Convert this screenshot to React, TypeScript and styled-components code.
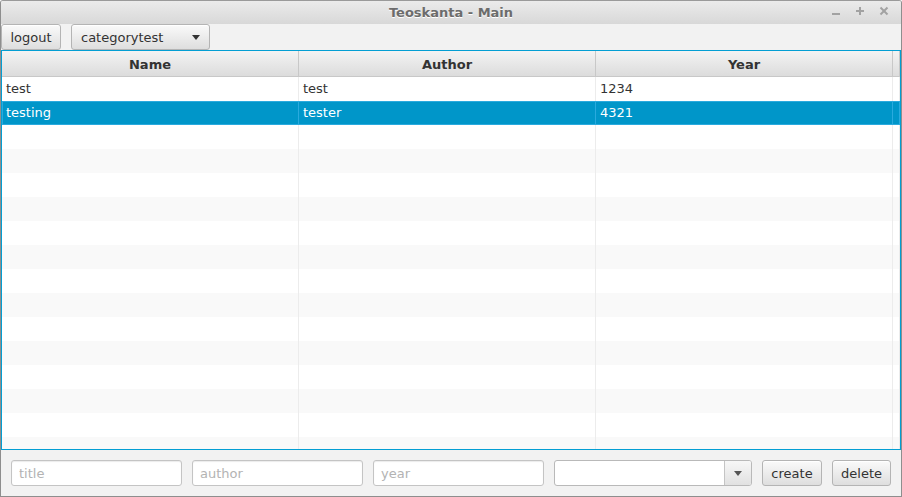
import React from "react";
import styled, { createGlobalStyle } from "styled-components";

const Global = createGlobalStyle`
  html, body { margin: 0; padding: 0; background: #ffffff; }
  body { font-family: "DejaVu Sans", "Liberation Sans", sans-serif; font-size: 13px; }
  * { box-sizing: border-box; }
`;

const Window = styled.div`
  width: 902px;
  height: 497px;
  border: 1px solid #8e8e8e;
  border-top-color: #9a9a9a;
  border-radius: 3px 3px 0 0;
  background: #f2f2f2;
  display: flex;
  flex-direction: column;
  overflow: hidden;
`;

const TitleBar = styled.div`
  height: 23px;
  flex: none;
  position: relative;
  display: flex;
  align-items: center;
  justify-content: center;
  background: linear-gradient(#ebebeb, #d8d8d8);
`;

const Title = styled.span`
  font-weight: bold;
  font-size: 13px;
  color: #6c6c6c;
  text-shadow: 0 1px 0 #ffffff;
`;

const Controls = styled.div`
  position: absolute;
  right: 12px;
  top: 5px;
  display: flex;
  gap: 14px;
`;

const Toolbar = styled.div`
  height: 26px;
  flex: none;
  display: flex;
  gap: 10px;
  align-items: stretch;
`;

const Button = styled.button<{ $w: number }>`
  width: ${(p) => p.$w}px;
  height: 26px;
  flex: none;
  margin: 0;
  padding: 0;
  font-family: inherit;
  font-size: 13px;
  color: #333333;
  border: 1px solid #b4b4b4;
  border-radius: 3px;
  background: linear-gradient(#fafafa, #dedede);
  box-shadow: inset 0 1px 0 #ffffff;
  display: flex;
  align-items: center;
  justify-content: center;
`;

const ComboButton = styled(Button)`
  justify-content: space-between;
  padding: 0 9px 0 9px;
`;

const Arrow = styled.span<{ $c: string }>`
  width: 0;
  height: 0;
  border-left: 4px solid transparent;
  border-right: 4px solid transparent;
  border-top: 5px solid ${(p) => p.$c};
`;

const Table = styled.div`
  height: 400px;
  flex: none;
  border: 1px solid #039ed3;
  background: #ffffff;
  display: flex;
  flex-direction: column;
  overflow: hidden;
`;

const HeaderRow = styled.div`
  height: 26px;
  flex: none;
  display: grid;
  grid-template-columns: 297px 297px 297px 1fr;
  background: linear-gradient(#f3f3f3, #dcdcdc);
  border-bottom: 1px solid #c8c8c8;
`;

const HeaderCell = styled.div`
  border-right: 1px solid #c8c8c8;
  display: flex;
  align-items: center;
  justify-content: center;
  padding-top: 1px;
  font-weight: bold;
  color: #333333;
`;

const Body = styled.div`
  flex: 1;
  overflow: hidden;
`;

const Row = styled.div<{ $odd: boolean; $sel: boolean }>`
  height: 24px;
  display: grid;
  grid-template-columns: 297px 297px 297px 1fr;
  background: ${(p) => (p.$sel ? "#0096c9" : p.$odd ? "#f9f9f9" : "#ffffff")};
  color: ${(p) => (p.$sel ? "#ffffff" : "#333333")};
  box-shadow: ${(p) => (p.$sel ? "inset 0 0 0 1px #2aaade" : "none")};
`;

const Cell = styled.div<{ $sel: boolean }>`
  border-right: 1px solid ${(p) => (p.$sel ? "#2aaade" : "#ececec")};
  display: flex;
  align-items: center;
  padding-left: 4px;
  padding-bottom: 2px;
  white-space: nowrap;
`;

const BottomBar = styled.div`
  flex: 1;
  display: flex;
  gap: 10px;
  padding: 10px 10px 0 10px;
  align-items: flex-start;
`;

const Field = styled.input`
  width: 171px;
  height: 26px;
  flex: none;
  margin: 0;
  border: 1px solid #c4c4c4;
  border-radius: 3px;
  background: #ffffff;
  box-shadow: inset 0 1px 1px #ececec;
  font-family: inherit;
  font-size: 13px;
  padding: 0 7px;
  color: #333333;
  outline: none;
  &::placeholder { color: #b3b3b3; }
`;

const Select = styled.div`
  width: 198px;
  height: 26px;
  flex: none;
  border: 1px solid #b9b9b9;
  border-radius: 3px;
  background: #ffffff;
  display: flex;
  justify-content: flex-end;
  overflow: hidden;
`;

const SelectArrow = styled.div`
  width: 27px;
  border-left: 1px solid #c4c4c4;
  background: linear-gradient(#f7f7f7, #e1e1e1);
  display: flex;
  align-items: center;
  justify-content: center;
`;

const rows = [
  ["test", "test", "1234"],
  ["testing", "tester", "4321"],
];

export default function App() {
  const bodyRows = Array.from({ length: 16 }, (_, i) => rows[i] ?? ["", "", ""]);
  return (
    <>
      <Global />
      <Window>
        <TitleBar>
          <Title>Teoskanta - Main</Title>
          <Controls>
            <svg width="10" height="10" viewBox="0 0 10 10">
              <line x1="1" y1="8" x2="9" y2="8" stroke="#a2a2a2" strokeWidth="2" />
            </svg>
            <svg width="10" height="10" viewBox="0 0 10 10">
              <line x1="1" y1="5" x2="9" y2="5" stroke="#a2a2a2" strokeWidth="2" />
              <line x1="5" y1="1" x2="5" y2="9" stroke="#a2a2a2" strokeWidth="2" />
            </svg>
            <svg width="10" height="10" viewBox="0 0 10 10">
              <line x1="1.5" y1="1.5" x2="8.5" y2="8.5" stroke="#a2a2a2" strokeWidth="2" />
              <line x1="8.5" y1="1.5" x2="1.5" y2="8.5" stroke="#a2a2a2" strokeWidth="2" />
            </svg>
          </Controls>
        </TitleBar>
        <Toolbar>
          <Button $w={60}>logout</Button>
          <ComboButton $w={139}>
            <span>categorytest</span>
            <Arrow $c="#333333" />
          </ComboButton>
        </Toolbar>
        <Table>
          <HeaderRow>
            <HeaderCell>Name</HeaderCell>
            <HeaderCell>Author</HeaderCell>
            <HeaderCell>Year</HeaderCell>
            <HeaderCell />
          </HeaderRow>
          <Body>
            {bodyRows.map((r, i) => {
              const sel = i === 1;
              return (
                <Row key={i} $odd={i % 2 === 1} $sel={sel}>
                  <Cell $sel={sel}>{r[0]}</Cell>
                  <Cell $sel={sel}>{r[1]}</Cell>
                  <Cell $sel={sel}>{r[2]}</Cell>
                  <Cell $sel={sel} />
                </Row>
              );
            })}
          </Body>
        </Table>
        <BottomBar>
          <Field placeholder="title" />
          <Field placeholder="author" />
          <Field placeholder="year" />
          <Select>
            <SelectArrow>
              <Arrow $c="#555555" />
            </SelectArrow>
          </Select>
          <Button $w={60}>create</Button>
          <Button $w={59}>delete</Button>
        </BottomBar>
      </Window>
    </>
  );
}
